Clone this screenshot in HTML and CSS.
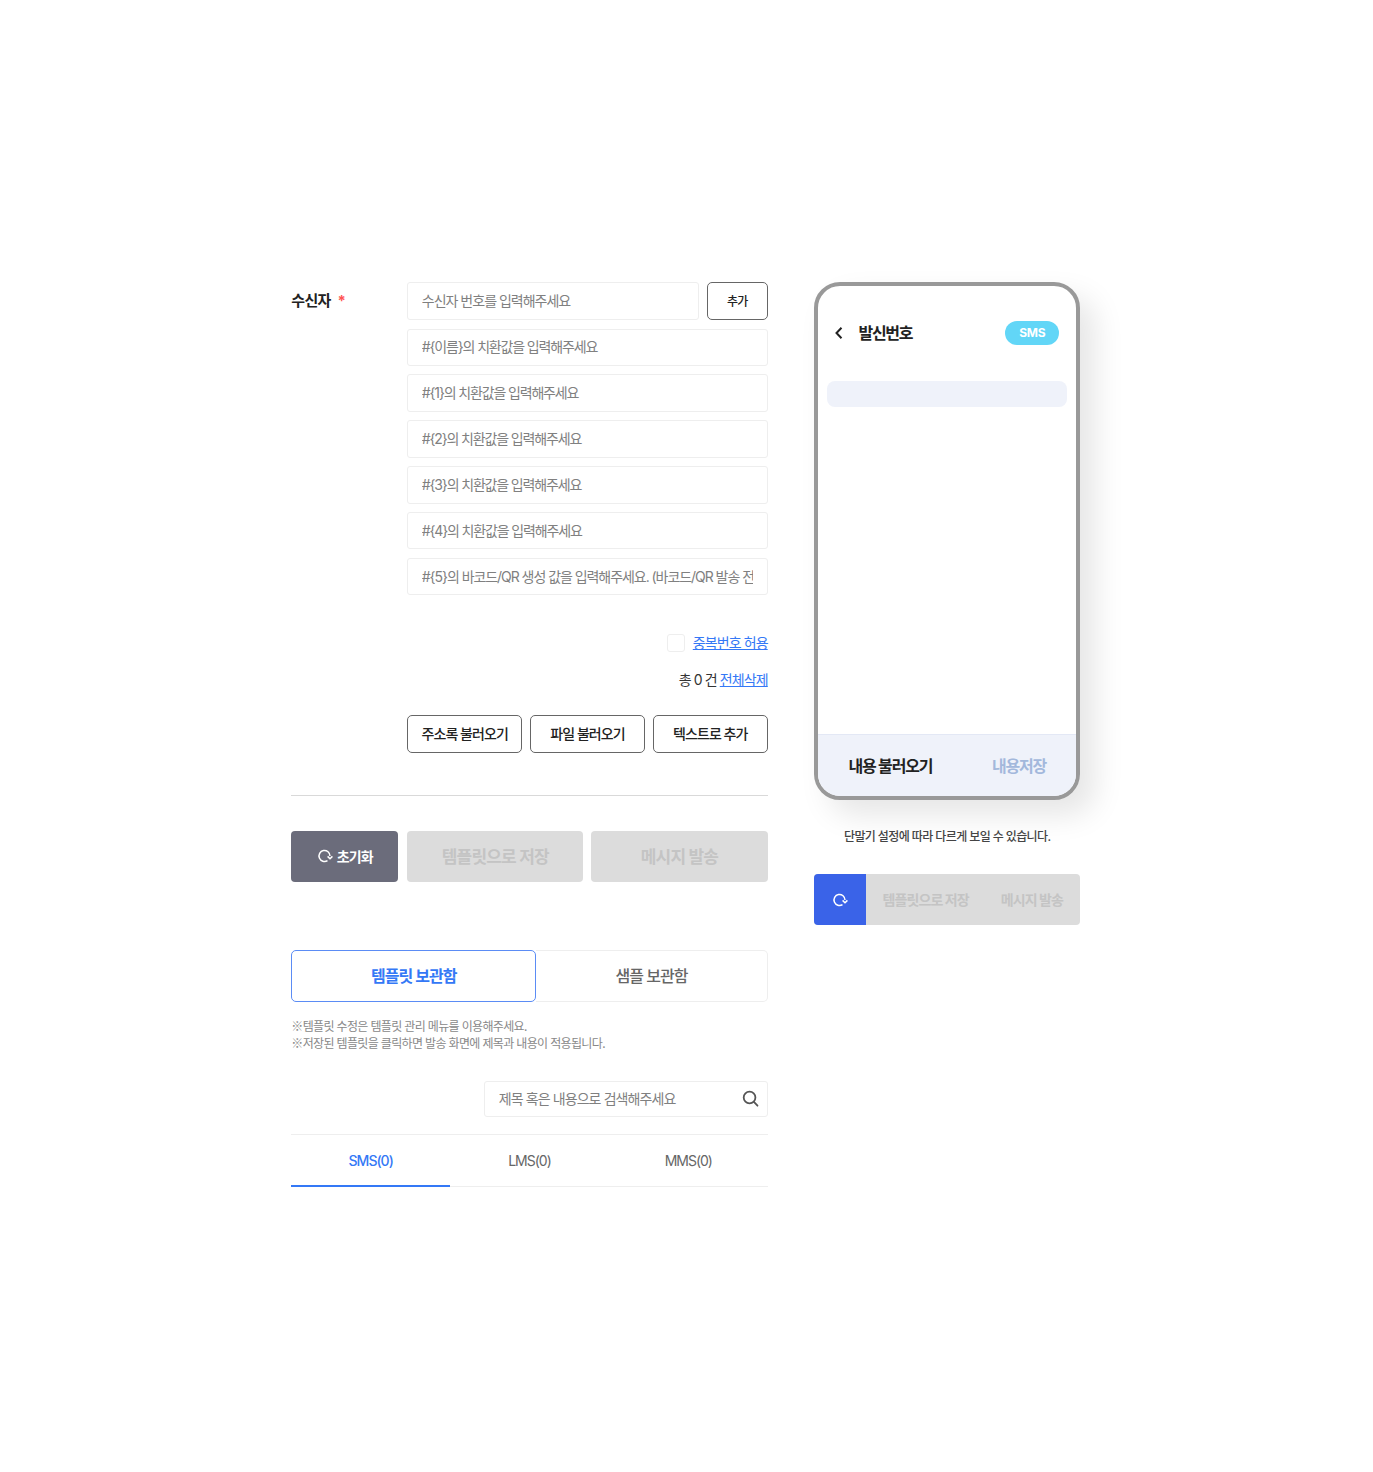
FILE: index.html
```html
<!DOCTYPE html>
<html lang="ko">
<head>
    <meta charset="UTF-8">
    <meta name="viewport" content="width=device-width, initial-scale=1.0">
    <title>메시지 발송</title>
    <link rel="stylesheet" href="styles.css">
</head>
<body>
    <div class="page">
        <div class="left-col">
            <div class="form-row">
                <div class="form-label">수신자 <span class="req">*</span></div>
                <div class="form-fields">
                    <div class="input-line">
                        <input class="text-input" type="text" placeholder="수신자 번호를 입력해주세요">
                        <button class="btn-outline btn-add" type="button">추가</button>
                    </div>
                    <input class="text-input subst" type="text" placeholder="#{이름}의 치환값을 입력해주세요">
                    <input class="text-input subst" type="text" placeholder="#{1}의 치환값을 입력해주세요">
                    <input class="text-input subst" type="text" placeholder="#{2}의 치환값을 입력해주세요">
                    <input class="text-input subst" type="text" placeholder="#{3}의 치환값을 입력해주세요">
                    <input class="text-input subst" type="text" placeholder="#{4}의 치환값을 입력해주세요">
                    <input class="text-input subst-long" type="text" placeholder="#{5}의 바코드/QR 생성 값을 입력해주세요. (바코드/QR 발송 전 필수 입력)">

                    <label class="dup-row">
                        <input class="check" type="checkbox">
                        <a class="link" href="#">중복번호 허용</a>
                    </label>
                    <div class="total-row">총 0 건 <a class="link" href="#">전체삭제</a></div>

                    <div class="load-btns">
                        <button class="btn-outline" type="button">주소록 불러오기</button>
                        <button class="btn-outline" type="button">파일 불러오기</button>
                        <button class="btn-outline" type="button">텍스트로 추가</button>
                    </div>
                </div>
            </div>

            <hr class="divider">

            <div class="action-btns">
                <button class="btn-reset" type="button">
                    <svg class="ico-reset" viewBox="0 0 16 16" fill="none" stroke="currentColor" stroke-width="1.5"><path d="M10.5 12.6A5.5 5.5 0 1 1 13 8"/><path d="M10.6 8.4l2.4 2.4 2.4-2.4"/></svg>
                    초기화
                </button>
                <button class="btn-disabled btn-save" type="button">템플릿으로 저장</button>
                <button class="btn-disabled btn-send" type="button">메시지 발송</button>
            </div>

            <div class="box-tabs">
                <button class="box-tab active" type="button">템플릿 보관함</button>
                <button class="box-tab" type="button">샘플 보관함</button>
            </div>

            <p class="notes">
                ※템플릿 수정은 템플릿 관리 메뉴를 이용해주세요.<br>
                ※저장된 템플릿을 클릭하면 발송 화면에 제목과 내용이 적용됩니다.
            </p>

            <div class="search-wrap">
                <div class="search-box">
                    <input class="search-input" type="text" placeholder="제목 혹은 내용으로 검색해주세요">
                    <svg class="ico-search" viewBox="0 0 18 18" fill="none" stroke="#555" stroke-width="1.9"><circle cx="8" cy="8" r="6.2"/><path d="M12.6 12.6l3.8 4" stroke-linecap="round"/></svg>
                </div>
            </div>

            <div class="type-tabs">
                <div class="type-tab active">SMS(0)</div>
                <div class="type-tab">LMS(0)</div>
                <div class="type-tab">MMS(0)</div>
            </div>
        </div>

        <div class="right-col">
            <div class="phone">
                <div class="phone-head">
                    <svg class="ico-back" viewBox="0 0 10 14" fill="none" stroke="#222" stroke-width="2"><path d="M7.5 1.8L2.5 7l5 5.2"/></svg>
                    <span class="phone-title">발신번호</span>
                    <span class="badge">SMS</span>
                </div>
                <div class="phone-bar"></div>
                <div class="phone-foot">
                    <span class="foot-load">내용 불러오기</span>
                    <span class="foot-save">내용저장</span>
                </div>
            </div>
            <p class="phone-note">단말기 설정에 따라 다르게 보일 수 있습니다.</p>
            <div class="mini-bar">
                <button class="mini-reset" type="button">
                    <svg class="ico-reset" viewBox="0 0 16 16" fill="none" stroke="currentColor" stroke-width="1.5"><path d="M10.5 12.6A5.5 5.5 0 1 1 13 8"/><path d="M10.6 8.4l2.4 2.4 2.4-2.4"/></svg>
                </button>
                <span class="mini-save">템플릿으로 저장</span>
                <span class="mini-send">메시지 발송</span>
            </div>
        </div>
    </div>
</body>
</html>
```

FILE: styles.css
```css
* {
    box-sizing: border-box;
}
body {
    margin: 0;
    background: #fff;
    font-family: Inter, "Noto Sans CJK KR", sans-serif;
    color: #222;
}
button, input {
    font-family: inherit;
}
.page {
    display: flex;
    gap: 46.8px;
    align-items: flex-start;
    min-height: 1472px;
    padding: 282px 0 0 291.3px;
}
.left-col {
    width: 476.4px;
}
.right-col {
    width: 265.5px;
}

/* recipient form */
.form-row {
    display: flex;
}
.form-label {
    width: 116px;
    padding-top: 7px;
    font-size: 15px;
    line-height: 24px;
    font-weight: 700;
    letter-spacing: -0.7px;
}
.req {
    margin-left: 4px;
    color: #f55;
}
.form-fields {
    flex: 1;
    display: flex;
    flex-direction: column;
    gap: 8.6px;
}
.input-line {
    display: flex;
    gap: 8px;
}
.text-input {
    width: 100%;
    height: 37.3px;
    padding: 0 14px 1px 13.5px;
    border: 1px solid #eee;
    border-radius: 3px;
    font-size: 14px;
    letter-spacing: -1px;
    outline: none;
}
.text-input.subst {
    letter-spacing: -1.15px;
}
.text-input.subst-long {
    letter-spacing: -1.05px;
}
.input-line .text-input {
    height: 38px;
}
.text-input::placeholder, .search-input::placeholder {
    color: #808080;
    opacity: 1;
}
.btn-outline {
    height: 38px;
    padding: 0 0 1px;
    flex: 1;
    background: #fff;
    border: 1px solid #666;
    border-radius: 5px;
    font-size: 14px;
    font-weight: 500;
    letter-spacing: -0.95px;
    color: #222;
}
.btn-add {
    flex: 0 0 61px;
    font-size: 12px;
}
.dup-row {
    display: flex;
    justify-content: flex-end;
    align-items: center;
    gap: 8px;
    margin-top: 27px;
    height: 24px;
    font-size: 14px;
    letter-spacing: -0.9px;
}
.check {
    appearance: none;
    width: 18px;
    height: 18px;
    margin: 0;
    border: 1px solid #eee;
    border-radius: 3px;
}
.link {
    color: #3478f6;
    text-decoration: underline;
    margin-bottom: 1px;
}
.total-row {
    margin-top: 4.4px;
    height: 24px;
    line-height: 24px;
    text-align: right;
    font-size: 14px;
    letter-spacing: -0.9px;
    color: #333;
}
.load-btns {
    display: flex;
    gap: 8px;
    margin-top: 14.4px;
}
.divider {
    height: 1px;
    margin: 42px 0 35px;
    border: 0;
    background: #d9d9d9;
}

/* main buttons */
.action-btns {
    display: flex;
    gap: 8px;
    height: 51px;
}
.btn-reset, .btn-disabled {
    border: 0;
    border-radius: 4px;
    padding: 0 0 1px;
}
.btn-reset {
    flex: 0 0 107px;
    margin-right: 1px;
    display: flex;
    align-items: center;
    justify-content: center;
    gap: 4px;
    background: #6b6c7b;
    color: #fff;
    font-size: 14px;
    font-weight: 700;
    letter-spacing: -0.9px;
}
.btn-disabled {
    flex: 1;
    background: #dcdcdc;
    color: #c4c4c4;
    font-size: 17px;
    font-weight: 700;
    letter-spacing: -0.8px;
}
.btn-save {
    flex: 0 0 176px;
}
.ico-reset {
    display: block;
    width: 16px;
    height: 16px;
}

/* template box */
.box-tabs {
    display: flex;
    margin-top: 68px;
    height: 52px;
}
.box-tab {
    padding: 0 0 1px;
    background: #fff;
    border: 1px solid #eee;
    border-left: 0;
    border-radius: 0 5px 5px 0;
    font-size: 16px;
    font-weight: 500;
    letter-spacing: -0.95px;
    color: #666;
    flex: 1;
}
.box-tab.active {
    flex: 0 0 245px;
    border: 1px solid #5b8cf5;
    border-radius: 5px;
    color: #3478f6;
    font-weight: 700;
}
.notes {
    margin: 15px 0 0;
    font-family: "Noto Sans CJK KR", sans-serif;
    font-size: 12px;
    line-height: 17px;
    letter-spacing: -0.65px;
    color: #888;
}
.search-wrap {
    display: flex;
    justify-content: flex-end;
    margin-top: 30px;
}
.search-box {
    display: flex;
    align-items: center;
    width: 284px;
    height: 36px;
    padding: 0 8px 0 14px;
    border: 1px solid #eee;
    border-radius: 3px;
}
.search-input {
    flex: 1;
    min-width: 0;
    border: 0;
    outline: none;
    padding: 0;
    font-size: 14px;
    letter-spacing: -0.9px;
}
.ico-search {
    width: 17px;
    height: 17px;
}
.type-tabs {
    display: flex;
    margin-top: 17px;
    height: 53px;
    border-top: 1px solid #eee;
    border-bottom: 1px solid #eee;
}
.type-tab {
    flex: 1;
    text-align: center;
    line-height: 52px;
    font-size: 14px;
    letter-spacing: -1px;
    color: #666;
}
.type-tab.active {
    height: 52px;
    border-bottom: 2px solid #3478f6;
    color: #3478f6;
    font-weight: 500;
}

/* phone preview */
.phone {
    display: flex;
    flex-direction: column;
    height: 518px;
    border: 4px solid #999;
    border-radius: 26px;
    overflow: hidden;
    box-shadow: 15px 15px 30px rgba(0, 0, 0, 0.1);
}
.phone-head {
    display: flex;
    align-items: center;
    height: 26px;
    margin-top: 33.5px;
    padding: 0 17px 0 16px;
}
.ico-back {
    width: 10px;
    height: 14px;
}
.phone-title {
    margin: -1px 0 0 14px;
    font-size: 16px;
    font-weight: 700;
    letter-spacing: -1.3px;
}
.badge {
    margin-left: auto;
    width: 53.5px;
    height: 24px;
    border-radius: 12px;
    background: #62d6f7;
    color: #fff;
    text-align: center;
    font-size: 12px;
    line-height: 24px;
    font-weight: 700;
    letter-spacing: -0.3px;
}
.phone-bar {
    height: 26px;
    margin: 35.5px 9px 0;
    border-radius: 8px;
    background: #eff2fa;
}
.phone-foot {
    display: flex;
    align-items: center;
    justify-content: space-between;
    margin-top: auto;
    height: 62px;
    padding: 0 30px 1px;
    background: #eff2fa;
    border-top: 1px solid #e3e8f5;
    font-size: 16px;
    font-weight: 700;
    letter-spacing: -1.2px;
}
.foot-save {
    color: #a3b8dc;
}
.phone-note {
    margin: 27px 0 0;
    text-align: center;
    font-size: 12px;
    line-height: 20px;
    font-weight: 500;
    letter-spacing: -0.6px;
    color: #444;
}
.mini-bar {
    display: flex;
    align-items: center;
    height: 51px;
    margin-top: 27px;
    border-radius: 4px;
    background: #dcdcdc;
    overflow: hidden;
    font-size: 14px;
    font-weight: 700;
    letter-spacing: -0.9px;
    color: #c4c4c4;
}
.mini-reset {
    width: 52px;
    height: 51px;
    padding: 0;
    border: 0;
    background: #3a63e8;
    color: #fff;
}
.mini-reset .ico-reset {
    margin: 1px auto 0;
}
.mini-save {
    margin: -2px 0 0 16px;
}
.mini-send {
    margin: -2px 0 0 32px;
}
```
